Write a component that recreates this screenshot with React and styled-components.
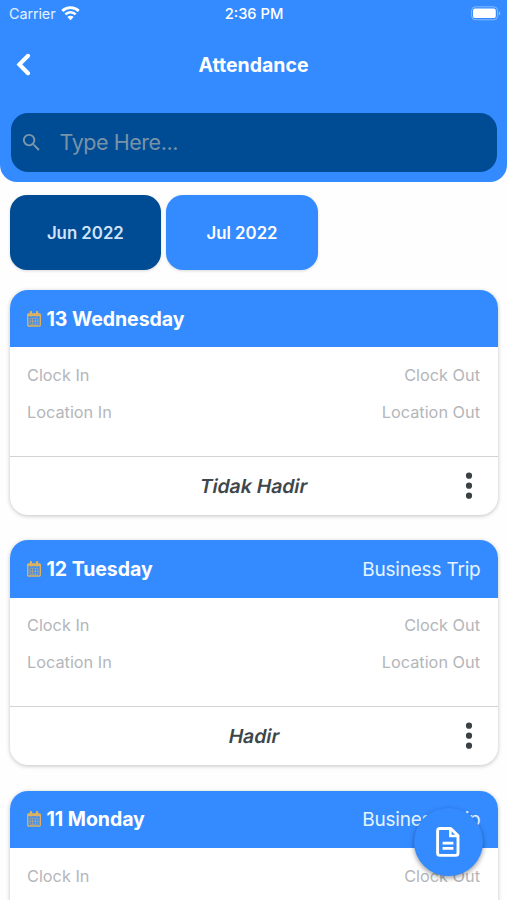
import React from "react";
import styled, { createGlobalStyle } from "styled-components";
import { MdSearch } from "react-icons/md";

const months = [
  { label: "Jun 2022", dark: true },
  { label: "Jul 2022", dark: false },
];

const days = [
  { date: "13 Wednesday", note: "", status: "Tidak Hadir" },
  { date: "12 Tuesday", note: "Business Trip", status: "Hadir" },
  { date: "11 Monday", note: "Business Trip", status: "Hadir" },
];

const WifiIcon = () => (
  <svg width="19" height="15" viewBox="0 0 19 15" fill="none">
    <path d="M1.3 5a11.7 11.7 0 0 1 16.4 0" stroke="#fff" strokeWidth="2.9" />
    <path d="M4.4 8.4a7.2 7.2 0 0 1 10.2 0" stroke="#fff" strokeWidth="2.6" />
    <path d="M9.5 14.2 6.4 11.1a4.3 4.3 0 0 1 6.2 0z" fill="#fff" />
  </svg>
);

const BatteryIcon = () => (
  <svg width="30" height="15" viewBox="0 0 30 15">
    <rect x="0.6" y="0.8" width="26" height="13" rx="4" fill="none" stroke="#fff" strokeOpacity="0.4" />
    <rect x="2" y="2.5" width="22.8" height="9.6" rx="2.2" fill="#fff" />
    <path d="M27.8 5.2c2 .8 2 3.4 0 4.2z" fill="#fff" fillOpacity="0.45" />
  </svg>
);

const BackIcon = () => (
  <svg width="15" height="23" viewBox="0 0 15 23" fill="none">
    <path d="M12 2.8 3.4 11.4l8.6 8.8" stroke="#fff" strokeWidth="4.1" strokeLinecap="round" />
  </svg>
);

const CalendarIcon = () => (
  <svg width="14" height="16" viewBox="0 0 14 16" fill="none" stroke="#dcb160">
    <rect x="0.7" y="3" width="12.6" height="12" rx="1" strokeWidth="1.4" />
    <path d="M.7 4h12.6" strokeWidth="2.4" />
    <path d="M3.9 1v3.4M10.1 1v3.4" strokeWidth="2.2" strokeLinecap="round" />
    <path d="M3 7.2h8v6H3zM3 10.2h8M5.7 7.2v6M8.4 7.2v6" strokeWidth="0.8" strokeOpacity="0.8" />
  </svg>
);

const DotsIcon = () => (
  <svg width="8" height="28" viewBox="0 0 8 28" fill="#394145">
    <circle cx="4" cy="3.7" r="3.1" />
    <circle cx="4" cy="13.7" r="3.1" />
    <circle cx="4" cy="23.7" r="3.1" />
  </svg>
);

const DocumentIcon = () => (
  <svg width="24" height="30" viewBox="0 0 24 30" fill="none" stroke="#fff" strokeWidth="2.9">
    <path d="M4 1.5h10.8L22 8.6V26a2.4 2.4 0 0 1-2.4 2.4H4A2.4 2.4 0 0 1 1.6 26V3.8A2.4 2.4 0 0 1 4 1.5z" strokeLinejoin="round" />
    <path d="M14.4 1.4v7.6H22" strokeWidth="2.6" />
    <path d="M6.6 16.2h10.8M6.6 21.4h10.8" strokeWidth="2.7" />
  </svg>
);

const App = () => {
  return (
    <Screen>
      <GlobalStyle />
      <Header>
        <StatusBar>
          <Carrier>
            Carrier
            <WifiIcon />
          </Carrier>
          <Time>2:36 PM</Time>
          <Battery>
            <BatteryIcon />
          </Battery>
        </StatusBar>
        <NavBar>
          <BackButton aria-label="Back">
            <BackIcon />
          </BackButton>
          <Title>Attendance</Title>
        </NavBar>
        <SearchBar>
          <MdSearch size={23} color="#7a97ad" />
          <SearchInput placeholder="Type Here..." />
        </SearchBar>
      </Header>
      <Months>
        {months.map((month) => (
          <Month key={month.label} $dark={month.dark}>
            {month.label}
          </Month>
        ))}
      </Months>
      <List>
        {days.map((day) => (
          <Card key={day.date}>
            <CardHeader>
              <CalendarIcon />
              <DayName>{day.date}</DayName>
              <Note>{day.note}</Note>
            </CardHeader>
            <CardBody>
              <Row>
                <Label>Clock In</Label>
                <Label>Clock Out</Label>
              </Row>
              <Row>
                <Label>Location In</Label>
                <Label>Location Out</Label>
              </Row>
            </CardBody>
            <CardFooter>
              <Status>{day.status}</Status>
              <MoreButton aria-label="More">
                <DotsIcon />
              </MoreButton>
            </CardFooter>
          </Card>
        ))}
      </List>
      <FloatingButton aria-label="Report">
        <DocumentIcon />
      </FloatingButton>
    </Screen>
  );
};

const GlobalStyle = createGlobalStyle`
  * {
    box-sizing: border-box;
  }
  body {
    margin: 0;
    overflow: hidden;
    background-color: #fefefe;
    font-family: Inter, "Liberation Sans", sans-serif;
  }
  button {
    padding: 0;
    border: none;
    background: none;
    cursor: pointer;
  }
  svg {
    display: block;
    flex-shrink: 0;
  }
`;

const Screen = styled.div`
  position: relative;
  height: 900px;
  overflow: hidden;
`;

const Header = styled.header`
  height: 181.6px;
  background-color: #348bff;
  border-radius: 0 0 17px 17px;
`;

const StatusBar = styled.div`
  display: grid;
  grid-template-columns: 1fr auto 1fr;
  align-items: center;
  height: 27px;
  padding: 0 6px 0 9px;
  color: #fff;
`;

const Carrier = styled.div`
  display: flex;
  align-items: center;
  gap: 6px;
  font-size: 14.4px;
  letter-spacing: -0.1px;
  color: #e4f1ff;
`;

const Time = styled.div`
  margin-left: -2px;
  font-size: 14.7px;
  font-weight: 500;
`;

const Battery = styled.div`
  display: flex;
  justify-content: flex-end;
`;

const NavBar = styled.div`
  display: grid;
  grid-template-columns: 40px 1fr 40px;
  align-items: center;
  height: 86.4px;
  padding: 0 16px 11px;
`;

const BackButton = styled.button`
  justify-self: start;
`;

const Title = styled.h1`
  margin: 0;
  text-align: center;
  font-size: 19.5px;
  line-height: 24px;
  font-weight: 650;
  color: #fff;
`;

const SearchBar = styled.div`
  display: flex;
  align-items: center;
  gap: 17px;
  height: 58.2px;
  margin: 0 10px 0 10.6px;
  padding-left: 9px;
  background-color: #004c94;
  border-radius: 17px;
`;

const SearchInput = styled.input`
  flex: 1;
  min-width: 0;
  padding: 0;
  border: none;
  outline: none;
  background: transparent;
  font-family: inherit;
  font-size: 21.5px;
  letter-spacing: -0.45px;
  color: #fff;
  &::placeholder {
    color: #7892a8;
  }
`;

const Months = styled.div`
  display: flex;
  gap: 5.2px;
  padding: 13.6px 10px 0 9.6px;
`;

const Month = styled.button`
  width: 151.5px;
  height: 75.3px;
  border-radius: 17px;
  background-color: ${(props) => (props.$dark ? "#004c94" : "#348bff")};
  color: ${(props) => (props.$dark ? "#cfe3fb" : "#fff")};
  box-shadow: 0 1px 3px rgba(0, 0, 0, 0.15);
  font-family: inherit;
  font-size: 16.8px;
  font-weight: 600;
`;

const List = styled.div`
  display: flex;
  flex-direction: column;
  gap: 25.3px;
  padding: 19.5px 9.5px 0 10px;
`;

const Card = styled.section`
  flex-shrink: 0;
  height: 225px;
  overflow: hidden;
  border-radius: 18px;
  background-color: #fff;
  box-shadow: 0 1px 4px rgba(0, 0, 0, 0.24);
`;

const CardHeader = styled.div`
  display: flex;
  align-items: center;
  height: 57.5px;
  padding: 0 17px 0 16.5px;
  background-color: #348bff;
  color: #fff;
`;

const DayName = styled.h2`
  flex: 1;
  margin: 0 0 0 6px;
  font-size: 19.5px;
  line-height: 24px;
  font-weight: 650;
  letter-spacing: -0.05px;
`;

const Note = styled.span`
  font-size: 19px;
  letter-spacing: -0.2px;
  color: #e4f4ff;
`;

const CardBody = styled.div`
  height: 109.5px;
  padding: 9px 17.5px 0 17px;
  border-bottom: 1.5px solid #d2d3d5;
`;

const Row = styled.div`
  display: flex;
  justify-content: space-between;
  align-items: center;
  height: 37px;
`;

const Label = styled.span`
  font-size: 16.3px;
  color: #b3b6ba;
`;

const CardFooter = styled.div`
  display: grid;
  grid-template-columns: 40px 1fr 40px;
  align-items: center;
  height: 58px;
  padding: 0 25px;
`;

/* slanted upright face, keeps the double-storey "a" */
const Status = styled.span`
  grid-column: 2;
  justify-self: center;
  transform: skewX(-11deg);
  font-size: 19.4px;
  font-weight: 600;
  color: #3d474b;
`;

const MoreButton = styled.button`
  justify-self: end;
`;

const FloatingButton = styled.button`
  position: absolute;
  left: 414px;
  top: 808px;
  display: flex;
  align-items: center;
  justify-content: center;
  width: 68.5px;
  height: 68px;
  border-radius: 50%;
  background-color: #348bff;
  box-shadow: 0 2px 5px rgba(0, 0, 0, 0.4);
`;

export default App;
